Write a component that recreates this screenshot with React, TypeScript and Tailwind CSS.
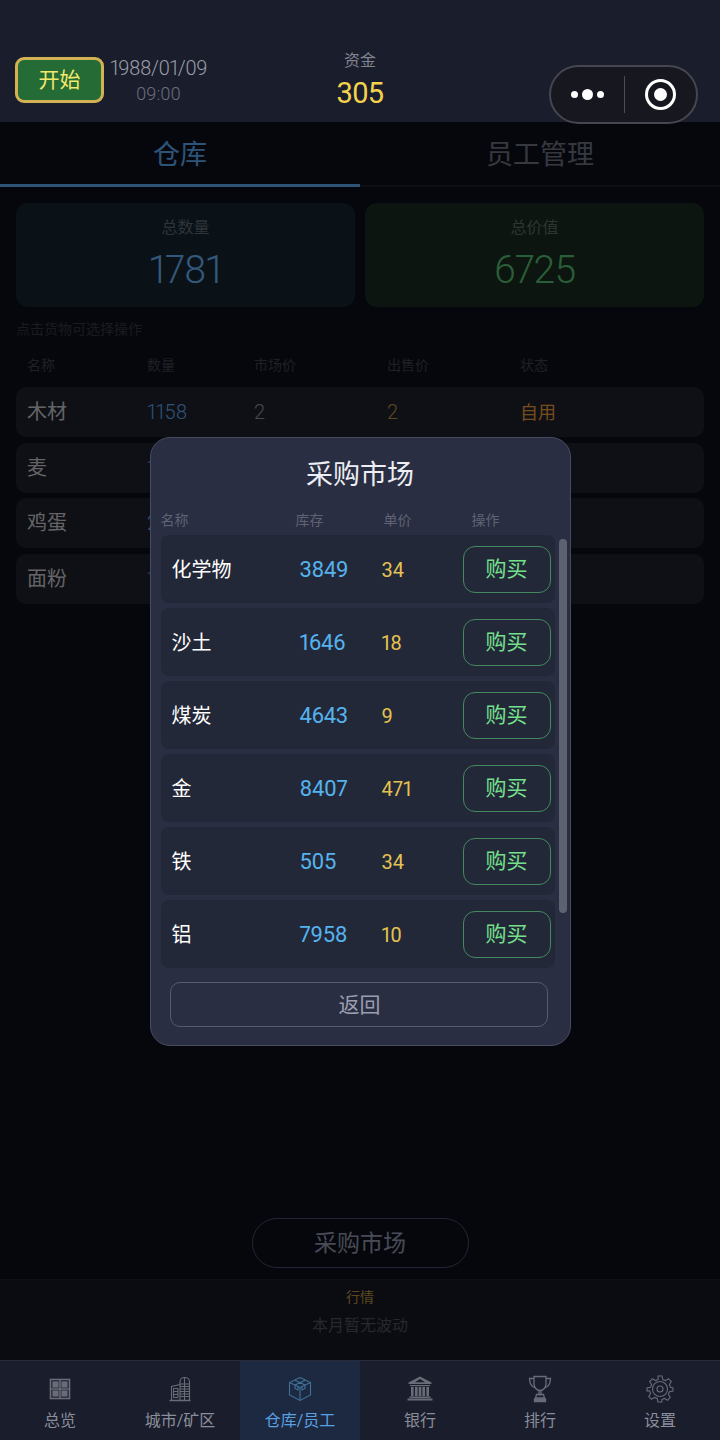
const font = { fontFamily: '"Roboto", "Noto Sans CJK SC", sans-serif' };

const goods = [
  { name: '木材', qty: '1158', market: '2', sell: '2', status: '自用' },
  { name: '麦', qty: '156', market: '3', sell: '3', status: '自用' },
  { name: '鸡蛋', qty: '289', market: '5', sell: '5', status: '自用' },
  { name: '面粉', qty: '178', market: '6', sell: '6', status: '自用' },
];

const market = [
  { name: '化学物', stock: '3849', price: '34' },
  { name: '沙土', stock: '1646', price: '18' },
  { name: '煤炭', stock: '4643', price: '9' },
  { name: '金', stock: '8407', price: '471' },
  { name: '铁', stock: '505', price: '34' },
  { name: '铝', stock: '7958', price: '10' },
];

const OverviewIcon = () => (
  <svg width="22" height="22" viewBox="0 0 22 22" fill="none" stroke="currentColor" strokeWidth="1.6">
    <rect x="1.500" y="1.500" width="19" height="19" />
    <path d="M11 1.500v19M1.500 11h19" />
    <rect x="4.200" y="4.200" width="4.600" height="4.600" fill="currentColor" />
    <rect x="13.200" y="4.200" width="4.600" height="4.600" fill="currentColor" />
    <rect x="4.200" y="13.200" width="4.600" height="4.600" fill="currentColor" />
    <rect x="13.200" y="13.200" width="4.600" height="4.600" fill="currentColor" />
  </svg>
);

const CityIcon = () => (
  <svg width="22" height="26" viewBox="0 0 22 26" fill="none" stroke="currentColor" strokeWidth="1.100">
    <path d="M11 24V5.500C11 3 13 1.500 15.500 1.500S20.500 3 20.500 5.500V24" />
    <path d="M11 8h9.500M11 10.500h9.500M11 13h9.500M11 15.500h9.500M11 18h9.500M11 20.500h9.500M15.500 1.500V24" />
    <path d="M2.500 24V10.500L11 8.500" />
    <path d="M4.500 12.500h4.500M4.500 15.500h4.500M4.500 18.500h4.500M4.500 21.500h4.500M4.500 12.500v9M9 12.500v9" />
    <path d="M0.500 24.500h21" strokeWidth="1.500" />
  </svg>
);

const BoxIcon = () => (
  <svg width="24" height="26" viewBox="0 0 24 26" fill="none" stroke="#3f7299" strokeWidth="1.100">
    <path d="M12 1.500 22.500 6.500V19L12 24.500 1.500 19V6.500Z" />
    <path d="M1.500 6.500 12 11.500 22.500 6.500M12 11.500V24.500" />
    <path d="M6.500 4 17 9M17.500 4 7 9M7 9v3.500l3 1.400V10.500M17 9v3.500l-3 1.400V10.500" />
  </svg>
);

const BankIcon = () => (
  <svg width="26" height="25" viewBox="0 0 26 25" fill="currentColor">
    <path d="M13 0.500 24.500 6.500V8H1.500V6.500ZM13 3 8 6.200h10Z" fillRule="evenodd" />
    <rect x="3" y="9" width="20" height="1.200" />
    <rect x="4" y="11" width="2.600" height="9" />
    <rect x="8" y="11" width="2.600" height="9" />
    <rect x="11.700" y="11" width="2.600" height="9" />
    <rect x="15.400" y="11" width="2.600" height="9" />
    <rect x="19.400" y="11" width="2.600" height="9" />
    <rect x="2.500" y="20.500" width="21" height="1.500" />
    <rect x="0.500" y="22.500" width="25" height="2" />
  </svg>
);

const TrophyIcon = () => (
  <svg width="24" height="28" viewBox="0 0 24 28" fill="none" stroke="currentColor" strokeWidth="1.300">
    <path d="M6 1.500h12v7c0 4-2.500 7-6 7s-6-3-6-7Z" />
    <path d="M6 3.500H1.500c0 5 1.500 8 6 9.500M18 3.500h4.500c0 5-1.500 8-6 9.500" />
    <path d="M11 15.500v4h2v-4" />
    <path d="M8.500 19.500h7l1 3.500h-9Z" />
    <path d="M6.500 24h11v2.500h-11Z" fill="currentColor" />
  </svg>
);

const GearIcon = () => (
  <svg width="28" height="28" viewBox="0 0 28 28" fill="none" stroke="currentColor" strokeWidth="1.100">
    <path d="M12 1h4l.8 3.500 2.700 1.100 3-1.900 2.800 2.800-1.900 3 1.100 2.700L27 13v3l-3.500.8-1.100 2.700 1.900 3-2.800 2.800-3-1.900-2.700 1.100L16 27h-4l-.8-3.500-2.700-1.100-3 1.900-2.800-2.800 1.900-3-1.100-2.700L1 16v-3l3.500-.8 1.100-2.700-1.900-3 2.800-2.800 3 1.900 2.700-1.100Z" />
    <circle cx="14" cy="14" r="7.500" />
    <circle cx="14" cy="14" r="3" />
  </svg>
);

const navItems = [
  { label: '总览', icon: <OverviewIcon /> },
  { label: '城市/矿区', icon: <CityIcon /> },
  { label: '仓库/员工', icon: <BoxIcon />, active: true },
  { label: '银行', icon: <BankIcon /> },
  { label: '排行', icon: <TrophyIcon /> },
  { label: '设置', icon: <GearIcon /> },
];

const Header = () => (
  <header className="relative grid h-[122px] shrink-0 grid-cols-3 bg-[#1a1d2c] pt-[50px]">
    <div className="flex items-start pl-[15px]">
      <button className="mt-[7px] flex h-[46px] w-[89px] items-center justify-center rounded-[9px] border-[3px] border-[#d3b254] bg-[#256b35] pt-[2px] text-[21px] text-[#f3e96b]">
        开始
      </button>
      <div className="ml-[6px] flex flex-col items-center">
        <span className="text-[20px] font-light leading-[36px] tracking-[-0.025em] text-[#9a9da8] proportional-nums">1988/01/09</span>
        <span className="mt-[-5px] text-[18px] font-light leading-[26px] text-[#6b6e7c] proportional-nums">09:00</span>
      </div>
    </div>
    <div className="flex flex-col items-center pt-[1px]">
      <span className="text-[16px] leading-[20px] text-[#80838f]">资金</span>
      <span className="mt-[2px] text-[29px] leading-[40px] tracking-[-0.02em] text-[#f4d24e]">305</span>
    </div>
    <div />
    {/* wechat capsule sits over the header edge */}
    <div className="absolute left-[549px] top-[65px] z-20 flex h-[59px] w-[149px] items-center rounded-full border-2 border-[#45464f] bg-[#17181f]">
      <div className="flex w-[73px] items-center justify-center gap-[4px]">
        <span className="h-[7px] w-[7px] rounded-full bg-white" />
        <span className="h-[11px] w-[11px] rounded-full bg-white" />
        <span className="h-[7px] w-[7px] rounded-full bg-white" />
      </div>
      <span className="h-[37px] w-px bg-[#4b4c55]" />
      <div className="flex flex-1 items-center justify-center">
        <span className="flex h-[31px] w-[31px] items-center justify-center rounded-full border-[3px] border-white">
          <span className="h-[13px] w-[13px] rounded-full bg-white" />
        </span>
      </div>
    </div>
  </header>
);

const Warehouse = () => (
  <div className="flex h-full flex-col bg-[#0c0f1a]">
    <div className="flex h-[65px] shrink-0 border-b-2 border-[#1c1e28] text-[27px]">
      <div className="mb-[-2px] flex w-1/2 items-center justify-center border-b-[3px] border-[#5ba6ee] pt-[4px] text-[#5ba6ee]">仓库</div>
      <div className="flex w-1/2 items-center justify-center pt-[4px] text-[#6d7180]">员工管理</div>
    </div>
    <div className="mt-[16px] flex gap-[10px] px-[16px]">
      <div className="flex h-[104px] flex-1 flex-col items-center rounded-[12px] bg-[#15222f] pt-[14px]">
        <span className="text-[16px] leading-[22px] text-[#5f6875]">总数量</span>
        <span className="mt-[6px] text-[39px] font-light leading-[50px] tracking-[-0.02em] text-[#66b2f5] proportional-nums">1781</span>
      </div>
      <div className="flex h-[104px] flex-1 flex-col items-center rounded-[12px] bg-[#182b1e] pt-[14px]">
        <span className="text-[16px] leading-[22px] text-[#5f6b62]">总价值</span>
        <span className="mt-[6px] text-[39px] font-light leading-[50px] tracking-[-0.02em] text-[#54bc72] proportional-nums">6725</span>
      </div>
    </div>
    <p className="mt-[12px] pl-[16px] text-[14px] leading-[20px] text-[#34363f]">点击货物可选择操作</p>
    <div className="mt-[16px] grid grid-cols-[120px_107px_133px_133px_1fr] pl-[27px] text-[14px] leading-[20px] text-[#3e404b]">
      <span>名称</span>
      <span>数量</span>
      <span>市场价</span>
      <span>出售价</span>
      <span>状态</span>
    </div>
    <div className="mt-[12px] flex flex-col gap-[5.500px] px-[16px]">
      {goods.map((g) => (
        <div key={g.name} className="grid h-[50px] grid-cols-[120px_107px_133px_133px_1fr] items-center rounded-[10px] bg-[#1e202a] pl-[11px]">
          <span className="text-[20px] text-[#c8c9cd]">{g.name}</span>
          <span className="text-[20px] font-light text-[#5ba6ee] proportional-nums">{g.qty}</span>
          <span className="text-[20px] font-light text-[#8b8e9a]">{g.market}</span>
          <span className="text-[20px] font-light text-[#b8913f]">{g.sell}</span>
          <span className="pt-[1px] text-[18px] text-[#e89a3c]">{g.status}</span>
        </div>
      ))}
    </div>
    <div className="flex-1" />
    <div className="mb-[11px] flex justify-center">
      <button className="h-[50px] w-[217px] rounded-full border-[1.500px] border-[#434b6e] pt-[3px] text-[23px] text-[#9095ab]">采购市场</button>
    </div>
    <div className="flex h-[81px] shrink-0 flex-col items-center border-t border-[#1c1f28] bg-[#161822] pt-[6px]">
      <span className="text-[14px] leading-[22px] text-[#b8913f]">行情</span>
      <span className="mt-[7px] text-[16px] leading-[22px] text-[#4d505c]">本月暂无波动</span>
    </div>
  </div>
);

const MarketModal = () => (
  <div className="absolute inset-0 z-10 flex items-center justify-center bg-black/50">
    <div className="relative mt-[1px] flex h-[609px] w-[421px] flex-col rounded-[20px] border-[1.500px] border-[#474b5f] bg-[#2a2e42] px-[10px] pt-[19px]">
      <h2 className="text-center text-[27px] font-normal leading-[36px] text-[#eceef4]">采购市场</h2>
      <div className="mt-[17px] grid grid-cols-[135px_88px_88px_1fr] text-[14px] leading-[20px] text-[#5f6373]">
        <span>名称</span>
        <span>库存</span>
        <span>单价</span>
        <span>操作</span>
      </div>
      <div className="mt-[5px] flex w-[394px] flex-col gap-[5px]">
        {market.map((m) => (
          <div key={m.name} className="grid h-[68px] grid-cols-[128px_82px_81px_88px] items-center rounded-[8px] bg-[#232839] pl-[11px]">
            <span className="pt-[1px] text-[20px] text-white">{m.name}</span>
            <span className="pt-[1px] text-[22px] tracking-[-0.015em] text-[#55b3ee] proportional-nums">{m.stock}</span>
            <span className="pt-[1px] text-[20px] text-[#e3c252] proportional-nums">{m.price}</span>
            <button className="h-[47px] rounded-[12px] border-[1.500px] border-[#44895c] pt-[1px] text-[21px] text-[#74e08c]">购买</button>
          </div>
        ))}
      </div>
      <button className="ml-[9px] mt-[14px] h-[45px] w-[378px] rounded-[10px] border-[1.500px] border-[#555a70] pl-[2px] pt-[2px] text-[21px] text-[#9a9eaf]">返回</button>
      {/* fake scrollbar */}
      <div className="absolute left-[408px] top-[101px] h-[374px] w-[8px] rounded-full bg-[#5e6270]" />
    </div>
  </div>
);

const BottomNav = () => (
  <nav className="flex h-[80px] shrink-0 border-t border-[#262a3b] bg-[#1a1d2c]">
    {navItems.map((item) => (
      <div key={item.label} className={`flex flex-1 flex-col items-center ${item.active ? 'bg-[#1d2940]' : 'text-[#696c78]'}`}>
        <div className="flex h-[49px] items-center justify-center pt-[6px]">{item.icon}</div>
        <span className={`text-[16px] leading-[22px] ${item.active ? 'text-[#5a9fe0]' : 'text-[#8b8e9a]'}`}>{item.label}</span>
      </div>
    ))}
  </nav>
);

export default function App() {
  return (
    <div className="flex h-[1440px] w-[720px] flex-col overflow-hidden bg-[#0c0f1a]" style={font}>
      <Header />
      <main className="relative min-h-0 flex-1">
        <Warehouse />
        <MarketModal />
      </main>
      <BottomNav />
    </div>
  );
}
